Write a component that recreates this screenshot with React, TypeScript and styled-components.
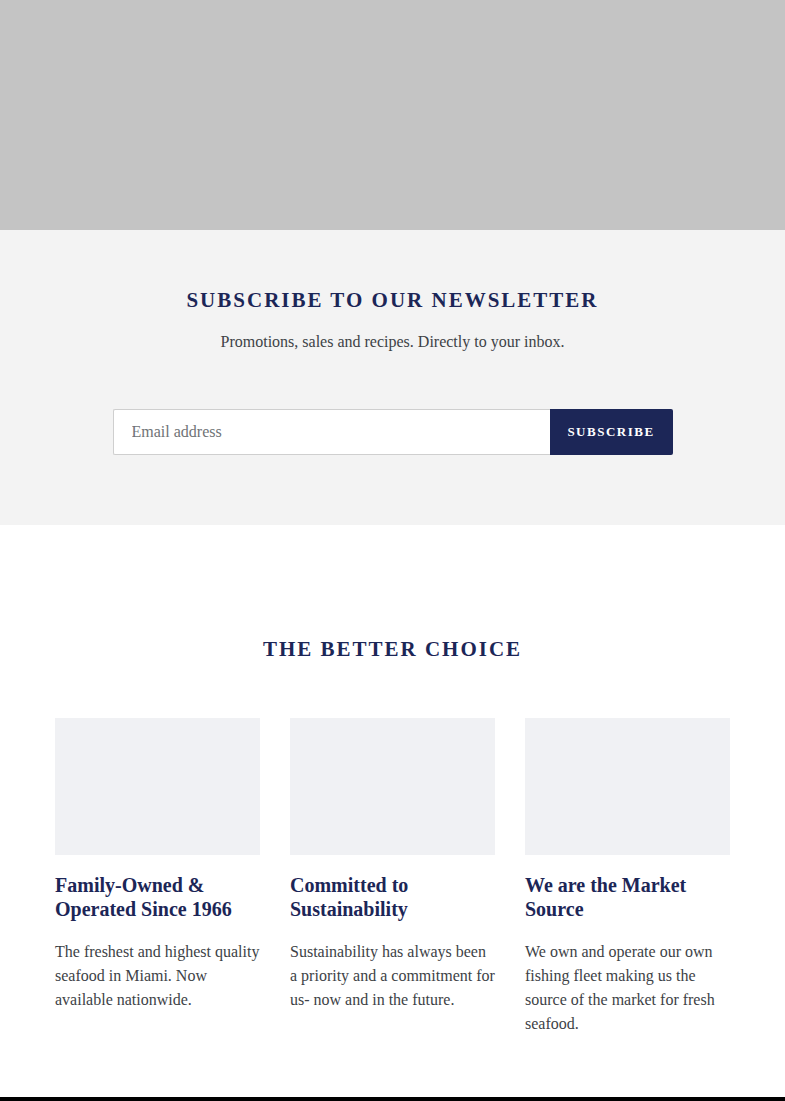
import styled, { createGlobalStyle } from 'styled-components';

const navy = '#1c2657';
const bodyText = '#3d4246';

const GlobalStyle = createGlobalStyle`
  html, body {
    margin: 0;
    padding: 0;
    background: #ffffff;
  }
  body {
    font-family: "Liberation Serif", "Times New Roman", serif;
    -webkit-font-smoothing: antialiased;
  }
  * {
    box-sizing: border-box;
  }
`;

const Page = styled.div`
  width: 785px;
  display: flex;
  flex-direction: column;
`;

const HeroPlaceholder = styled.div`
  height: 230px;
  background: #c4c4c4;
`;

const Newsletter = styled.section`
  background: #f3f3f3;
  height: 295px;
  padding-top: 56px;
  display: flex;
  flex-direction: column;
  align-items: center;
`;

const SectionTitle = styled.h2`
  margin: 0;
  font-size: 21px;
  line-height: 28px;
  font-weight: 700;
  letter-spacing: 2px;
  text-transform: uppercase;
  color: ${navy};
  text-align: center;
`;

const Subtitle = styled.p`
  margin: 16px 0 0;
  font-size: 16px;
  line-height: 24px;
  color: ${bodyText};
`;

const Form = styled.form`
  margin-top: 55px;
  display: flex;
  width: 560px;
  height: 46px;
`;

const EmailInput = styled.input`
  flex: 1;
  height: 46px;
  border: 1px solid #cfcfcf;
  border-right: none;
  border-radius: 2px 0 0 2px;
  background: #ffffff;
  padding: 0 18px;
  font-family: inherit;
  font-size: 16px;
  color: ${bodyText};
  outline: none;

  &::placeholder {
    color: #6f7376;
  }
`;

const SubscribeButton = styled.button`
  width: 123px;
  height: 46px;
  border: none;
  border-radius: 0 2px 2px 0;
  background: ${navy};
  color: #ffffff;
  font-family: inherit;
  font-size: 13px;
  font-weight: 700;
  letter-spacing: 1.5px;
  text-transform: uppercase;
  cursor: pointer;
`;

const Features = styled.section`
  background: #ffffff;
  padding: 110px 55px 61px;
  display: flex;
  flex-direction: column;
  align-items: center;
`;

const Grid = styled.div`
  margin-top: 55px;
  width: 100%;
  display: grid;
  grid-template-columns: repeat(3, 1fr);
  column-gap: 30px;
`;

const Card = styled.div`
  display: flex;
  flex-direction: column;
`;

const ImageBox = styled.div`
  height: 137px;
  background: #f0f1f4;
`;

const CardTitle = styled.h3`
  margin: 18px 0 0;
  font-size: 20px;
  line-height: 24px;
  font-weight: 700;
  color: ${navy};
`;

const CardText = styled.p`
  margin: 19px 0 0;
  font-size: 16px;
  line-height: 24px;
  color: ${bodyText};
`;

const FooterEdge = styled.div`
  height: 4px;
  background: #000000;
`;

const features = [
  {
    title: 'Family-Owned & Operated Since 1966',
    text: 'The freshest and highest quality seafood in Miami. Now available nationwide.',
  },
  {
    title: 'Committed to Sustainability',
    text: 'Sustainability has always been a priority and a commitment for us- now and in the future.',
  },
  {
    title: 'We are the Market Source',
    text: 'We own and operate our own fishing fleet making us the source of the market for fresh seafood.',
  },
];

export default function App() {
  return (
    <Page>
      <GlobalStyle />
      <HeroPlaceholder />
      <Newsletter>
        <SectionTitle>Subscribe to our newsletter</SectionTitle>
        <Subtitle>Promotions, sales and recipes. Directly to your inbox.</Subtitle>
        <Form onSubmit={(e) => e.preventDefault()}>
          <EmailInput type="email" placeholder="Email address" />
          <SubscribeButton type="submit">Subscribe</SubscribeButton>
        </Form>
      </Newsletter>
      <Features>
        <SectionTitle>The better choice</SectionTitle>
        <Grid>
          {features.map((f) => (
            <Card key={f.title}>
              <ImageBox />
              <CardTitle>{f.title}</CardTitle>
              <CardText>{f.text}</CardText>
            </Card>
          ))}
        </Grid>
      </Features>
      <FooterEdge />
    </Page>
  );
}
